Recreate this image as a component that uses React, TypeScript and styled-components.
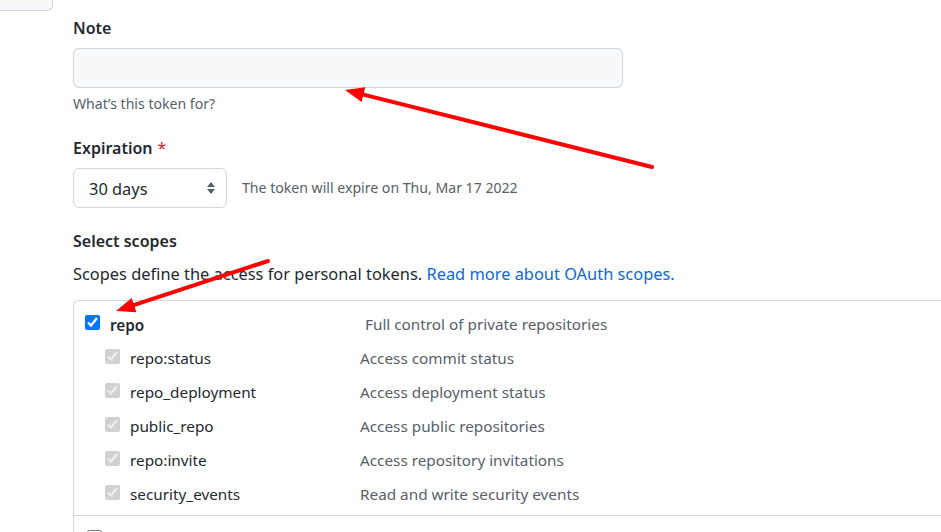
import React from "react";
import styled, { createGlobalStyle } from "styled-components";

const GlobalStyle = createGlobalStyle`
    html, body {
        margin: 0;
        padding: 0;
        background: #fff;
        overflow: hidden;
    }
    body {
        font-family: "Noto Sans", "Open Sans", "Liberation Sans", sans-serif;
        color: #24292f;
    }
    * {
        box-sizing: border-box;
    }
`

const Page = styled.div`
    position: relative;
    display: flex;
    width: 941px;
    height: 532px;
    overflow: hidden;
`

const Sidebar = styled.div`
    width: 73px;
    flex-shrink: 0;
`

const SideTab = styled.div`
    width: 53px;
    height: 11px;
    background: #f6f8fa;
    border: 1px solid #d0d7de;
    border-top: none;
    border-left: none;
    border-bottom-right-radius: 6px;
`

const Main = styled.div`
    flex: 1;
    padding-top: 16px;
`

const Label = styled.div<{ $gap?: number }>`
    font-size: 16px;
    font-weight: 600;
    line-height: 24px;
    margin-top: ${(p) => p.$gap || 0}px;

    .required {
        color: #cf222e;
        font-weight: 400;
        margin-left: 5px;
    }
`

const TextInput = styled.div`
    margin-top: 8px;
    width: 550px;
    height: 40px;
    background: #f6f8fa;
    border: 1px solid #d0d7de;
    border-radius: 6px;
`

const Hint = styled.div`
    margin-top: 6px;
    font-size: 14.1px;
    line-height: 20px;
    color: #57606a;
`

const ExpirationRow = styled.div`
    margin-top: 8px;
    display: flex;
    align-items: center;
    gap: 15px;
`

const Select = styled.div`
    width: 154px;
    height: 40px;
    padding: 0 9px 0 15px;
    display: flex;
    align-items: center;
    justify-content: space-between;
    border: 1px solid #d0d7de;
    border-radius: 6px;
    background: #fff;
    font-size: 16.4px;
    color: #24292f;

    svg {
        width: 12px;
        height: 16px;
        fill: #57606a;
    }
`

const ExpireNote = styled.span`
    font-size: 14.1px;
    color: #57606a;
    margin-bottom: 2px;
`

const Lead = styled.p`
    margin: 9px 0 0;
    font-size: 16.4px;
    line-height: 24px;

    a {
        color: #0969da;
        text-decoration: none;
    }
`

const ScopeBox = styled.div`
    margin-top: 14px;
    border: 1px solid #d0d7de;
    border-right: none;
    border-top-left-radius: 6px;
    width: 900px;
`

const ScopeGroup = styled.div`
    padding: 6px 0 4px;
    border-bottom: 1px solid #d0d7de;

    &:last-child {
        border-bottom: none;
    }
`

const ScopeRow = styled.div<{ $indent: number; $nameWidth: number }>`
    display: grid;
    grid-template-columns: 15px ${(p) => p.$nameWidth}px 1fr;
    column-gap: 10px;
    align-items: center;
    height: 34px;
    padding-left: ${(p) => p.$indent}px;
    font-size: 15.3px;
`

const Check = styled.input`
    width: 15px;
    height: 15px;
    margin: 0;
    align-self: start;
    margin-top: 8px;
    accent-color: #0075ff;
`

const ScopeName = styled.span<{ $bold?: boolean }>`
    font-weight: ${(p) => (p.$bold ? 600 : 400)};
    color: #24292f;
    margin-top: ${(p) => (p.$bold ? 2 : 0)}px;
`

const ScopeDesc = styled.span`
    color: #57606a;
`

const Overlay = styled.svg`
    position: absolute;
    left: 0;
    top: 0;
    pointer-events: none;
`

type Scope = { name: string; desc: string };

const repoScopes: Scope[] = [
    { name: "repo:status", desc: "Access commit status" },
    { name: "repo_deployment", desc: "Access deployment status" },
    { name: "public_repo", desc: "Access public repositories" },
    { name: "repo:invite", desc: "Access repository invitations" },
    { name: "security_events", desc: "Read and write security events" },
];

type ArrowProps = { x1: number; y1: number; x2: number; y2: number };

// red annotation arrow, head at (x2, y2)
const Arrow = ({ x1, y1, x2, y2 }: ArrowProps) => {
    const dx = x2 - x1;
    const dy = y2 - y1;
    const len = Math.hypot(dx, dy);
    const ux = dx / len;
    const uy = dy / len;
    const head = 19;
    const half = 7.5;
    const bx = x2 - ux * head;
    const by = y2 - uy * head;
    const pts = [
        `${x2},${y2}`,
        `${bx - uy * half},${by + ux * half}`,
        `${bx + uy * half},${by - ux * half}`,
    ].join(" ");
    return (
        <g>
            <line x1={x1} y1={y1} x2={bx + ux * 2} y2={by + uy * 2} stroke="#ff0000" strokeWidth={4} strokeLinecap="round" />
            <polygon points={pts} fill="#ff0000" />
        </g>
    );
};

const App = () => {
    return (
        <>
            <GlobalStyle />
            <Page>
                <Sidebar>
                    <SideTab />
                </Sidebar>
                <Main>
                    <Label>Note</Label>
                    <TextInput />
                    <Hint>What’s this token for?</Hint>

                    <Label $gap={22}>
                        Expiration<span className="required">*</span>
                    </Label>
                    <ExpirationRow>
                        <Select>
                            <span>30 days</span>
                            <svg viewBox="0 0 12 16">
                                <path d="M6 2 L10 7 H2 Z" />
                                <path d="M6 14 L10 9 H2 Z" />
                            </svg>
                        </Select>
                        <ExpireNote>The token will expire on Thu, Mar 17 2022</ExpireNote>
                    </ExpirationRow>

                    <Label $gap={21}>Select scopes</Label>
                    <Lead>
                        Scopes define the access for personal tokens.{" "}
                        <a href="#">Read more about OAuth scopes.</a>
                    </Lead>

                    <ScopeBox>
                        <ScopeGroup>
                            <ScopeRow $indent={11} $nameWidth={245}>
                                <Check type="checkbox" checked readOnly />
                                <ScopeName $bold>repo</ScopeName>
                                <ScopeDesc>Full control of private repositories</ScopeDesc>
                            </ScopeRow>
                            {repoScopes.map((s) => (
                                <ScopeRow key={s.name} $indent={31} $nameWidth={220}>
                                    <Check type="checkbox" checked disabled readOnly />
                                    <ScopeName>{s.name}</ScopeName>
                                    <ScopeDesc>{s.desc}</ScopeDesc>
                                </ScopeRow>
                            ))}
                        </ScopeGroup>
                        <ScopeGroup>
                            {/* next scope group, only its checkbox edge is in view */}
                            <ScopeRow $indent={13} $nameWidth={245}>
                                <Check type="checkbox" readOnly />
                            </ScopeRow>
                        </ScopeGroup>
                    </ScopeBox>
                </Main>
                <Overlay width={941} height={532}>
                    <Arrow x1={652} y1={167} x2={345} y2={90} />
                    <Arrow x1={268} y1={261} x2={116} y2={311} />
                </Overlay>
            </Page>
        </>
    );
};

export default App;
